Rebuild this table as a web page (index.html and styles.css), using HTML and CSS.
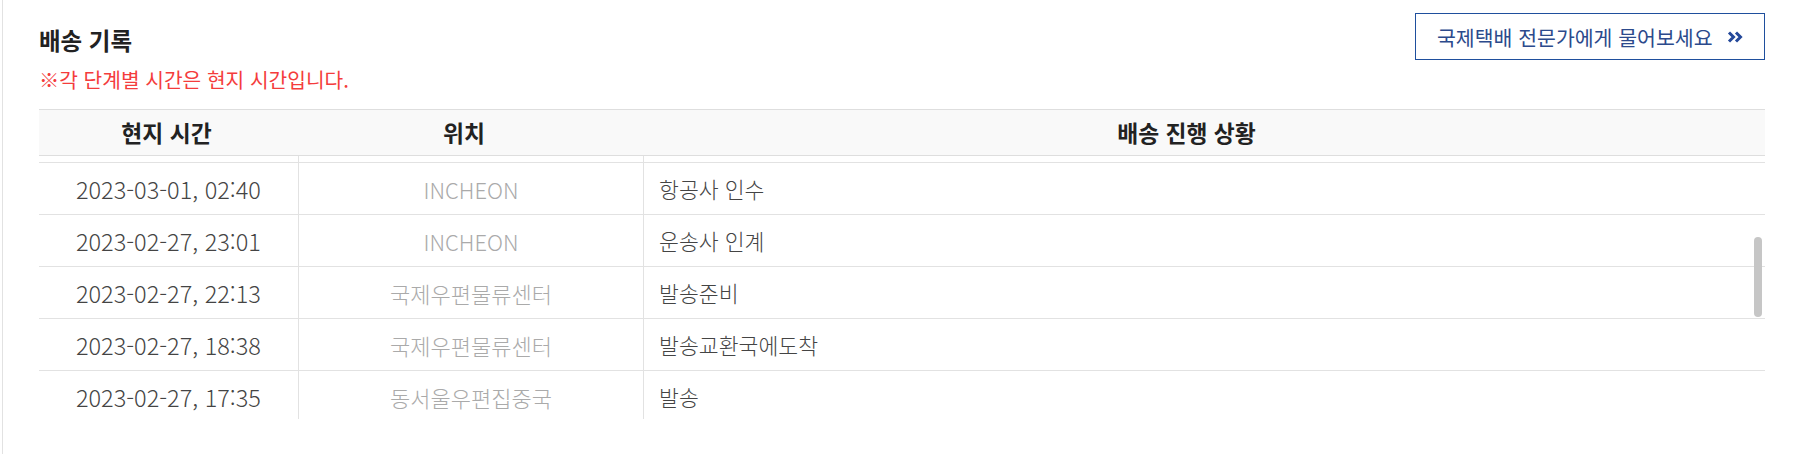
FILE: index.html
```html
<!DOCTYPE html>
<html lang="ko">
<head>
<meta charset="UTF-8" />
<meta name="viewport" content="width=device-width, initial-scale=1" />
<link rel="stylesheet" href="styles.css">
</head>
<body>

<div class="panel">
  <div class="panel-top">
    <div class="heading">
      <h2 class="title">배송 기록</h2>
      <p class="note">※각 단계별 시간은 현지 시간입니다.</p>
    </div>
    <a href="#" class="ask-btn">
      <span>국제택배 전문가에게 물어보세요</span>
      <svg class="ask-icon" width="16" height="12" viewBox="0 0 16 12" aria-hidden="true">
        <polyline points="2,1.5 6.5,6 2,10.5" />
        <polyline points="9,1.5 13.5,6 9,10.5" />
      </svg>
    </a>
  </div>

  <div class="track">
    <div class="track-head">
      <div class="th">현지 시간</div>
      <div class="th">위치</div>
      <div class="th">배송 진행 상황</div>
    </div>
    <div class="track-body">
      <div class="row stub">
        <div class="cell"></div>
        <div class="cell"></div>
        <div class="cell"></div>
      </div>
      <div class="row">
        <div class="cell time">2023-03-01, 02:40</div>
        <div class="cell place">INCHEON</div>
        <div class="cell status">항공사 인수</div>
      </div>
      <div class="row">
        <div class="cell time">2023-02-27, 23:01</div>
        <div class="cell place">INCHEON</div>
        <div class="cell status">운송사 인계</div>
      </div>
      <div class="row">
        <div class="cell time">2023-02-27, 22:13</div>
        <div class="cell place">국제우편물류센터</div>
        <div class="cell status">발송준비</div>
      </div>
      <div class="row">
        <div class="cell time">2023-02-27, 18:38</div>
        <div class="cell place">국제우편물류센터</div>
        <div class="cell status">발송교환국에도착</div>
      </div>
      <div class="row">
        <div class="cell time">2023-02-27, 17:35</div>
        <div class="cell place">동서울우편집중국</div>
        <div class="cell status">발송</div>
      </div>
    </div>
    <div class="scroll-thumb"></div>
  </div>
</div>

</body>
</html>
```

FILE: styles.css
```css
body {
  margin: 0;
  background: #fff;
  font-family: "Noto Sans CJK KR", "Noto Sans", sans-serif;
  color: #333;
}

.panel {
  margin-left: 2px;
  border-left: 1px solid #e2e2e2;
  padding: 13px 29px 34px 36px;
  min-height: 407px;
}

.panel-top {
  display: flex;
  justify-content: space-between;
  align-items: flex-start;
}

.title {
  margin: 12px 0 0;
  font-size: 23.5px;
  line-height: 30px;
  font-weight: 700;
  color: #222;
}

.note {
  margin: 11px 0 0;
  font-size: 20.3px;
  line-height: 26px;
  color: #f43c3c;
}

.ask-btn {
  display: flex;
  align-items: center;
  gap: 14px;
  box-sizing: border-box;
  width: 350px;
  height: 47px;
  padding: 0 20px 0 21px;
  border: 1px solid #1f4f9d;
  color: #2c4a8c;
  font-size: 20.5px;
  text-decoration: none;
  white-space: nowrap;
}

.ask-icon polyline {
  fill: none;
  stroke: #24489a;
  stroke-width: 3;
}

.track {
  position: relative;
  margin-top: 17px;
}

.track-head {
  display: grid;
  grid-template-columns: 15% 20% 65%;
  padding-right: 26px;
  background: #f9f9f9;
  border-top: 1px solid #dedede;
  border-bottom: 1px solid #dedede;
}

.th {
  text-align: center;
  font-size: 22.8px;
  line-height: 45px;
  font-weight: 700;
  color: #222;
}

.track-body {
  height: 263px;
  overflow: hidden;
}

.row {
  display: grid;
  grid-template-columns: 15% 20% 65%;
  height: 51px;
  border-bottom: 1px solid #e2e2e2;
}

.row.stub {
  height: 6px;
}

.cell {
  display: flex;
  align-items: center;
  justify-content: center;
  font-size: 22px;
  font-weight: 300;
  color: #444;
}

.cell + .cell {
  border-left: 1px solid #e2e2e2;
}

.time {
  font-size: 23.5px;
}

.place {
  color: #aaa;
}

.status {
  justify-content: flex-start;
  padding-left: 15px;
  font-size: 21.6px;
}

.scroll-thumb {
  position: absolute;
  top: 128px;
  right: 3px;
  width: 8px;
  height: 80px;
  border-radius: 4px;
  background: #c6c6c6;
}
```
